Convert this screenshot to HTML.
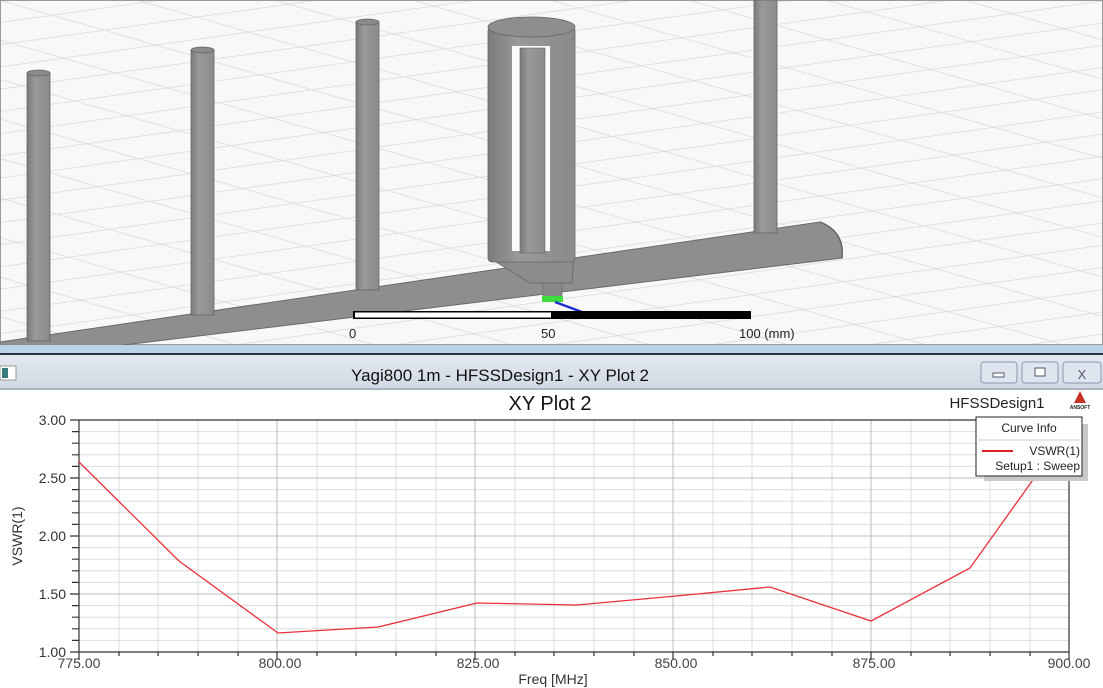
<!DOCTYPE html>
<html><head><meta charset="utf-8"><style>
html,body{margin:0;padding:0;width:1103px;height:688px;overflow:hidden;background:#fff;font-family:"Liberation Sans",sans-serif}
svg{position:absolute;left:0;top:0}
</style></head><body>
<svg width="1103" height="688" viewBox="0 0 1103 688" xmlns="http://www.w3.org/2000/svg" font-family="Liberation Sans, sans-serif">
<defs>
<pattern id="g1" width="100" height="22" patternUnits="userSpaceOnUse" patternTransform="rotate(-8)">
<path d="M0 0H100" stroke="#d4d4d4" stroke-width="1.3" fill="none"/>
</pattern>
<pattern id="g2" width="100" height="38" patternUnits="userSpaceOnUse" patternTransform="rotate(16)">
<path d="M0 0H100" stroke="#d4d4d4" stroke-width="1.3" fill="none"/>
</pattern>
<linearGradient id="rod" x1="0" x2="1"><stop offset="0" stop-color="#7a7a7a"/><stop offset="0.35" stop-color="#9a9a9a"/><stop offset="1" stop-color="#8a8a8a"/></linearGradient>
<linearGradient id="tb" x1="0" y1="0" x2="0" y2="1"><stop offset="0" stop-color="#e3e8ef"/><stop offset="1" stop-color="#d0d9e4"/></linearGradient>
</defs>
<!-- 3D area -->
<rect x="0" y="0" width="1103" height="345" fill="#f8f8f8"/>
<rect x="0" y="0" width="1103" height="345" fill="url(#g1)"/>
<rect x="0" y="0" width="1103" height="345" fill="url(#g2)"/>
<rect x="0.5" y="0.5" width="1102" height="344" fill="none" stroke="#9a9a9a"/>
<!-- boom -->
<path d="M0 342 L820 222 Q845 232 842 258 L0 360 Z" fill="#8e8e8e" stroke="#6a6a6a"/>
<path d="M820 222 Q845 232 842 258" fill="none" stroke="#666" stroke-width="1.5"/>
<!-- rods -->
<rect x="27" y="73" width="23" height="268" fill="url(#rod)" stroke="#666" stroke-width="0.8"/>
<ellipse cx="38.5" cy="73" rx="11.5" ry="3" fill="#8a8a8a" stroke="#666" stroke-width="0.8"/>
<rect x="191" y="50" width="23" height="265" fill="url(#rod)" stroke="#666" stroke-width="0.8"/>
<ellipse cx="202.5" cy="50" rx="11.5" ry="3" fill="#8a8a8a" stroke="#666" stroke-width="0.8"/>
<rect x="356" y="22" width="23" height="268" fill="url(#rod)" stroke="#666" stroke-width="0.8"/>
<ellipse cx="367.5" cy="22" rx="11.5" ry="3" fill="#8a8a8a" stroke="#666" stroke-width="0.8"/>
<rect x="754" y="0" width="23" height="233" fill="url(#rod)" stroke="#666" stroke-width="0.8"/>
<!-- driven element -->
<path d="M493 260 L530 283 L572 283 L574 255 Z" fill="#8c8c8c" stroke="#666" stroke-width="0.8"/>
<rect x="488" y="27" width="87" height="235" rx="4" fill="url(#rod)" stroke="#666" stroke-width="0.8"/>
<ellipse cx="531.5" cy="27" rx="43.5" ry="10" fill="#8e8e8e" stroke="#666" stroke-width="0.8"/>
<rect x="512" y="46" width="38" height="205" fill="#fafafa"/>
<rect x="520" y="48" width="25" height="205" fill="url(#rod)" stroke="#666" stroke-width="0.6"/>
<rect x="543" y="283" width="19" height="14" fill="#888" stroke="#666" stroke-width="0.6"/>
<rect x="542" y="296" width="21" height="6" fill="#3ddc3d"/>
<path d="M555 302 L582 312" stroke="#1f2fd0" stroke-width="2.5"/>
<!-- scale bar -->
<rect x="353" y="311" width="398" height="8" fill="#000"/>
<rect x="355" y="312.5" width="196" height="5" fill="#fff"/>
<text x="349" y="338" font-size="13" fill="#222">0</text>
<text x="541" y="338" font-size="13" fill="#222">50</text>
<text x="739" y="338" font-size="13" fill="#222">100 (mm)</text>
<!-- separator -->
<rect x="0" y="345" width="1103" height="9" fill="#bcd2e8"/>
<rect x="0" y="353" width="1103" height="2" fill="#223344"/>
<!-- title bar -->
<rect x="0" y="355" width="1103" height="34" fill="url(#tb)"/>
<rect x="0" y="388" width="1103" height="2" fill="#aab4c0"/>
<rect x="0" y="366" width="16" height="14" fill="#fff" stroke="#999"/>
<rect x="2" y="368" width="6" height="10" fill="#3a7a7a"/>
<text x="500" y="381" font-size="17" fill="#111" text-anchor="middle">Yagi800 1m - HFSSDesign1 - XY Plot 2</text>
<g fill="#dfe5ee" stroke="#8898aa">
<rect x="981" y="362" width="36" height="21" rx="3"/>
<rect x="1022" y="362" width="36" height="21" rx="3"/>
<rect x="1063" y="362" width="38" height="21" rx="3"/>
</g>
<rect x="993" y="373" width="11" height="4" fill="#fff" stroke="#556"/>
<rect x="1035" y="368" width="10" height="8" fill="#fff" stroke="#556"/>
<text x="1082" y="379" font-size="13" fill="#556" text-anchor="middle">X</text>
<!-- plot -->
<text x="550" y="410" font-size="20" fill="#111" text-anchor="middle">XY Plot 2</text>
<text x="997" y="408" font-size="15" fill="#222" text-anchor="middle">HFSSDesign1</text>
<path d="M1080 391 L1086 403 L1074 403 Z" fill="#c8302a"/>
<text x="1080" y="409" font-size="5" fill="#222" text-anchor="middle" font-weight="bold">ANSOFT</text>
<g stroke="#dcdcdc" stroke-width="1">
<path d="M119 420V652M158 420V652M198 420V652M238 420V652M277 420V652M317 420V652M356 420V652M396 420V652M436 420V652M475 420V652M515 420V652M554 420V652M594 420V652M634 420V652M673 420V652M713 420V652M752 420V652M792 420V652M832 420V652M871 420V652M911 420V652M950 420V652M990 420V652M1030 420V652"/>
<path d="M79 431.6H1069M79 443.2H1069M79 454.8H1069M79 466.4H1069M79 489.6H1069M79 501.2H1069M79 512.8H1069M79 524.4H1069M79 547.6H1069M79 559.2H1069M79 570.8H1069M79 582.4H1069M79 605.6H1069M79 617.2H1069M79 628.8H1069M79 640.4H1069"/>
</g>
<g stroke="#bdbdbd" stroke-width="1">
<path d="M79 478H1069M79 536H1069M79 594H1069M277 420V652M475 420V652M673 420V652M871 420V652"/>
</g>
<g stroke="#333" stroke-width="1.2" fill="none">
<path d="M79 420V652H1069V420H79"/>
<path d="M70 420H79M70 478H79M70 536H79M70 594H79M70 652H79"/>
<path d="M72 431.6H79M72 443.2H79M72 454.8H79M72 466.4H79M72 489.6H79M72 501.2H79M72 512.8H79M72 524.4H79M72 547.6H79M72 559.2H79M72 570.8H79M72 582.4H79M72 605.6H79M72 617.2H79M72 628.8H79M72 640.4H79"/>
<path d="M79 652V660M277 652V660M475 652V660M673 652V660M871 652V660M1069 652V660"/>
<path d="M119 652V656M158 652V656M198 652V656M238 652V656M317 652V656M356 652V656M396 652V656M436 652V656M515 652V656M554 652V656M594 652V656M634 652V656M713 652V656M752 652V656M792 652V656M832 652V656M911 652V656M950 652V656M990 652V656M1030 652V656"/>
</g>
<polyline points="79,462 179,561 278,633 378,627 477,603 577,605 676,596 770,587 871,621 970,568 1040,470 1062,430" fill="none" stroke="#e8303a" stroke-width="1.3"/>
<g font-size="14" fill="#333" text-anchor="end">
<text x="66" y="425">3.00</text><text x="66" y="483">2.50</text><text x="66" y="541">2.00</text><text x="66" y="599">1.50</text><text x="66" y="657">1.00</text>
</g>
<g font-size="14" fill="#444" text-anchor="middle">
<text x="79" y="668">775.00</text><text x="280" y="668">800.00</text><text x="478" y="668">825.00</text><text x="676" y="668">850.00</text><text x="874" y="668">875.00</text><text x="1069" y="668">900.00</text>
</g>
<text x="553" y="684" font-size="14" fill="#333" text-anchor="middle">Freq [MHz]</text>
<text transform="translate(22,536) rotate(-90)" font-size="14" fill="#333" text-anchor="middle">VSWR(1)</text>
<!-- legend -->
<rect x="984" y="424" width="104" height="57" fill="#c8c8c8"/>
<rect x="976" y="417" width="106" height="59" fill="#fff" stroke="#222"/>
<line x1="976" y1="440" x2="1082" y2="440" stroke="#ccc"/>
<text x="1029" y="432" font-size="12" fill="#222" text-anchor="middle">Curve Info</text>
<line x1="982" y1="451" x2="1013" y2="451" stroke="#e02020" stroke-width="2"/>
<text x="1080" y="455" font-size="12" fill="#222" text-anchor="end">VSWR(1)</text>
<text x="1080" y="470" font-size="12" fill="#222" text-anchor="end">Setup1 : Sweep</text>
</svg>
</body></html>
